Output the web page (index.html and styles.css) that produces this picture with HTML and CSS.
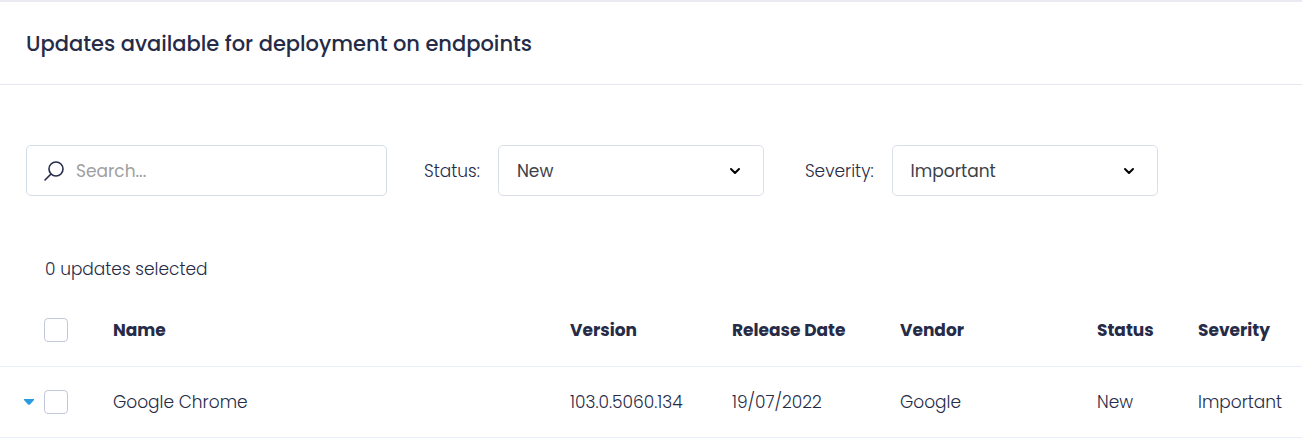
FILE: index.html
```html
<!DOCTYPE html>
<html lang="en">
<head>
  <meta charset="UTF-8" />
  <meta name="viewport" content="width=device-width, initial-scale=1.0"/>
  <title>Updates available for deployment</title>
  <link rel="stylesheet" href="styles.css">
</head>
<body>
  <header class="panel-header">
    <h1>Updates available for deployment on endpoints</h1>
  </header>

  <form class="filters">
    <div class="search-box">
      <svg class="search-icon" viewBox="0 0 20 20" aria-hidden="true">
        <circle cx="12" cy="8" r="7" />
        <path d="M7 13L1 19" />
      </svg>
      <input type="search" id="search" name="search" placeholder="Search..." aria-label="Search">
    </div>

    <div class="filter">
      <label for="status">Status:</label>
      <div class="select-box">
        <select id="status" name="status">
          <option>New</option>
          <option>Installed</option>
        </select>
        <svg class="chevron" viewBox="0 0 12 8" aria-hidden="true"><path d="M2 2L6 6L10 2" /></svg>
      </div>
    </div>

    <div class="filter">
      <label for="severity">Severity:</label>
      <div class="select-box">
        <select id="severity" name="severity">
          <option>Important</option>
          <option>Critical</option>
        </select>
        <svg class="chevron" viewBox="0 0 12 8" aria-hidden="true"><path d="M2 2L6 6L10 2" /></svg>
      </div>
    </div>
  </form>

  <p class="selected-count">0 updates selected</p>

  <table class="updates">
    <thead>
      <tr>
        <th class="col-select"><div class="select-cell"><input type="checkbox" aria-label="Select all updates"></div></th>
        <th>Name</th>
        <th class="col-version">Version</th>
        <th class="col-date">Release Date</th>
        <th class="col-vendor">Vendor</th>
        <th class="col-status">Status</th>
        <th class="col-severity">Severity</th>
      </tr>
    </thead>
    <tbody>
      <tr>
        <td>
          <div class="select-cell">
            <button type="button" class="expand" aria-label="Show details">
              <svg viewBox="0 0 10 6" aria-hidden="true"><path d="M0 0H10V1L6 5.500Q5 6 4 5.500L0 1Z" /></svg>
            </button>
            <input type="checkbox" aria-label="Select Google Chrome">
          </div>
        </td>
        <td>Google Chrome</td>
        <td>103.0.5060.134</td>
        <td>19/07/2022</td>
        <td>Google</td>
        <td>New</td>
        <td>Important</td>
      </tr>
    </tbody>
  </table>
</body>
</html>
```

FILE: styles.css
```css
* {
  box-sizing: border-box;
}

body {
  margin: 0;
  font-family: Poppins, Inter, sans-serif;
  font-size: 17px;
  font-weight: 300;
  line-height: 26px;
  color: #262b47;
  background-color: #fff;
}

.panel-header {
  padding: 27px 26px 25px;
  border-top: 2px solid #e9eaf2;
  border-bottom: 1px solid #e6e7f1;
}

h1 {
  margin: 0;
  font-size: 21px;
  font-weight: 500;
  line-height: 30px;
}

.filters {
  display: flex;
  align-items: center;
  gap: 37px;
  padding: 60px 26px;
}

.search-box {
  display: flex;
  align-items: center;
  flex: 0 1 361px;
  gap: 12px;
  height: 51px;
  padding: 0 17px;
  border: 1px solid #d3dde8;
  border-radius: 5px;
}

.search-icon {
  flex: none;
  width: 20px;
  height: 20px;
  fill: none;
  stroke: #262b47;
  stroke-width: 1.6;
  stroke-linecap: round;
}

input[type="search"] {
  width: 100%;
  min-width: 0;
  padding: 0;
  border: none;
  outline: none;
  background: none;
  font: inherit;
  font-weight: 400;
  color: #262b47;
}

input[type="search"]::placeholder {
  color: #a0a0a0;
}

.filter {
  display: flex;
  align-items: center;
  gap: 18px;
  margin-right: 4px;
}

.select-box {
  display: grid;
  align-items: center;
  width: 266px;
}

.select-box select,
.select-box .chevron {
  grid-area: 1 / 1;
}

select {
  appearance: none;
  width: 100%;
  height: 51px;
  padding: 0 40px 0 18px;
  border: 1px solid #d9deea;
  border-radius: 5px;
  background-color: #fff;
  font: inherit;
  font-weight: 400;
  color: #3c4148;
}

.chevron {
  justify-self: end;
  width: 12px;
  height: 8px;
  margin-right: 23px;
  fill: none;
  stroke: #000;
  stroke-width: 2;
  stroke-linecap: round;
  stroke-linejoin: round;
  pointer-events: none;
}

.selected-count {
  margin: 0;
  padding: 0 45px 13px;
}

.updates {
  width: 100%;
  table-layout: fixed;
  border-collapse: collapse;
}

.updates th,
.updates td {
  height: 71px;
  padding: 0;
  border-bottom: 1px solid #e8edfa;
  text-align: left;
}

.updates th {
  font-weight: 700;
}

.col-select {
  width: 113px;
}

.col-version {
  width: 162px;
}

.col-date {
  width: 168px;
}

.col-vendor {
  width: 197px;
}

.col-status {
  width: 101px;
}

.col-severity {
  width: 104px;
}

.select-cell {
  display: flex;
  align-items: center;
  justify-content: flex-end;
  gap: 10px;
  width: 68px;
}

input[type="checkbox"] {
  appearance: none;
  width: 24px;
  height: 24px;
  margin: 0;
  border: 1px solid #c3c9da;
  border-radius: 4px;
  background-color: #fff;
}

input[type="checkbox"]:checked {
  background-color: #2a9be0;
}

.expand {
  display: flex;
  padding: 0;
  border: none;
  background: none;
  cursor: pointer;
}

.expand svg {
  width: 10px;
  height: 6px;
  fill: #2a9be0;
}
```
